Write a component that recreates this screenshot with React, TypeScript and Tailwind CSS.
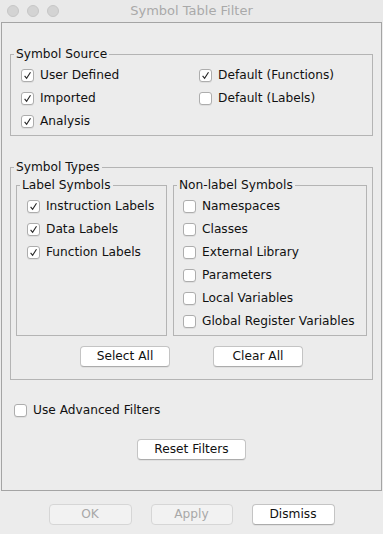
import type { ReactNode } from "react";

// Mac-style "Symbol Table Filter" dialog (inactive window).

function Check({ on }: { on?: boolean }) {
  return (
    <span className="flex h-[13px] w-[13px] shrink-0 items-center justify-center rounded-[3px] border border-[#adadad] bg-white shadow-[0_1px_0_rgba(0,0,0,0.06)]">
      {on && (
        <svg width="9" height="9" viewBox="0 0 9 9">
          <path d="M1.6 4.9 L3.6 7.3 L7.5 1.3" fill="none" stroke="#262626" strokeWidth="1.1" />
        </svg>
      )}
    </span>
  );
}

function Row({ label, on }: { label: string; on?: boolean }) {
  return (
    <label className="flex h-[23px] items-center gap-[6px] whitespace-nowrap">
      <Check on={on} />
      <span>{label}</span>
    </label>
  );
}

function Group({ title, children, className = "" }: { title: string; children: ReactNode; className?: string }) {
  return (
    <fieldset className={`min-w-0 border border-[#b4b4b4] ${className}`}>
      <legend className="ml-[3px] px-[2px] leading-[16px]">{title}</legend>
      {children}
    </fieldset>
  );
}

function Btn({ children, width, disabled }: { children: ReactNode; width: string; disabled?: boolean }) {
  return (
    <button
      disabled={disabled}
      className={`flex h-[21px] items-center justify-center rounded-[4px] border leading-none ${width} ${
        disabled
          ? "border-[#d6d6d6] bg-[#f2f2f2] text-[#a8a8a8]"
          : "border-[#c4c4c4] border-b-[#acacac] bg-white text-[#111] shadow-[0_1px_0_rgba(0,0,0,0.05)]"
      }`}
    >
      {children}
    </button>
  );
}

export default function App() {
  return (
    <div className="flex h-[534px] w-[383px] flex-col bg-[#ececec] font-['DejaVu_Sans',sans-serif] text-[12.2px] text-[#111]">
      {/* title bar */}
      <div className="grid h-[22px] grid-cols-[1fr_auto_1fr] items-center bg-[#e9e9e9]">
        <div className="flex gap-[8px] pl-[7px]">
          <span className="h-[12px] w-[12px] rounded-full border border-[#c6c6c6] bg-[#d3d3d3]" />
          <span className="h-[12px] w-[12px] rounded-full border border-[#c6c6c6] bg-[#d3d3d3]" />
          <span className="h-[12px] w-[12px] rounded-full border border-[#c6c6c6] bg-[#d3d3d3]" />
        </div>
        <span className="text-[13px] text-[#a9a9a9]">Symbol Table Filter</span>
        <div />
      </div>

      {/* main panel */}
      <div className="mx-[1px] flex h-[469px] flex-col border border-[#a4a4a4] px-[8px] pt-[23px]">
        <Group title="Symbol Source">
          <div className="grid grid-cols-[178px_1fr] pb-[2px] pl-[10px] pt-[2px]">
            <Row label="User Defined" on />
            <Row label="Default (Functions)" on />
            <Row label="Imported" on />
            <Row label="Default (Labels)" />
            <Row label="Analysis" on />
          </div>
        </Group>

        <Group title="Symbol Types" className="mt-[23px]">
          <div className="px-[5px] pt-[2px]">
            <div className="grid grid-cols-[151px_194px] gap-[6px]">
              <Group title="Label Symbols">
                <div className="pb-[2px] pl-[10px] pt-[2px]">
                  <Row label="Instruction Labels" on />
                  <Row label="Data Labels" on />
                  <Row label="Function Labels" on />
                </div>
              </Group>
              <Group title="Non-label Symbols">
                <div className="pb-[2px] pl-[9px] pt-[2px]">
                  <Row label="Namespaces" />
                  <Row label="Classes" />
                  <Row label="External Library" />
                  <Row label="Parameters" />
                  <Row label="Local Variables" />
                  <Row label="Global Register Variables" />
                </div>
              </Group>
            </div>
            <div className="mb-[12px] mt-[10px] flex justify-center gap-[43px]">
              <Btn width="w-[90px]">Select All</Btn>
              <Btn width="w-[90px]">Clear All</Btn>
            </div>
          </div>
        </Group>

        <div className="ml-[4px] mt-[19px]">
          <Row label="Use Advanced Filters" />
        </div>

        <div className="mt-[17px] flex justify-center">
          <Btn width="w-[109px]">Reset Filters</Btn>
        </div>
      </div>

      {/* dialog buttons */}
      <div className="mt-[13px] flex justify-center gap-[19px]">
        <Btn width="w-[83px]" disabled>OK</Btn>
        <Btn width="w-[82px]" disabled>Apply</Btn>
        <Btn width="w-[83px]">Dismiss</Btn>
      </div>
    </div>
  );
}
